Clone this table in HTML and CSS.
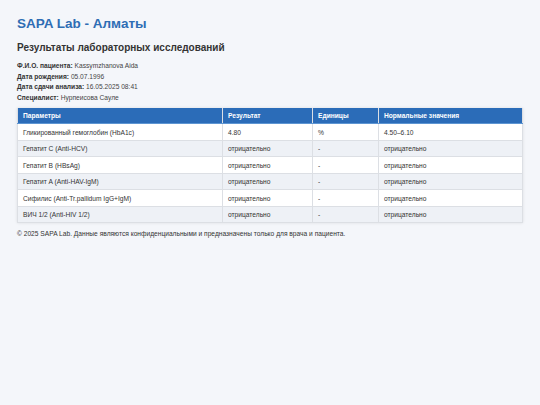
FILE: index.html
```html
<!DOCTYPE html>
<html lang="ru">
<head>
<meta charset="utf-8">
<title>SAPA Lab</title>
<link rel="stylesheet" href="styles.css">
</head>
<body>
<div class="page">
  <h1 class="title">SAPA Lab - Алматы</h1>
  <h2 class="subtitle">Результаты лабораторных исследований</h2>
  <div class="info">
    <div><b>Ф.И.О. пациента:</b> Kassymzhanova Aida</div>
    <div><b>Дата рождения:</b> 05.07.1996</div>
    <div><b>Дата сдачи анализа:</b> 16.05.2025 08:41</div>
    <div><b>Специалист:</b> Нурпеисова Сауле</div>
  </div>
  <table class="results">
    <thead>
      <tr><th class="c1">Параметры</th><th class="c2">Результат</th><th class="c3">Единицы</th><th class="c4">Нормальные значения</th></tr>
    </thead>
    <tbody>
      <tr><td>Гликированный гемоглобин (HbA1c)</td><td>4.80</td><td>%</td><td>4.50–6.10</td></tr>
      <tr><td>Гепатит C (Anti-HCV)</td><td>отрицательно</td><td>-</td><td>отрицательно</td></tr>
      <tr><td>Гепатит B (HBsAg)</td><td>отрицательно</td><td>-</td><td>отрицательно</td></tr>
      <tr><td>Гепатит A (Anti-HAV-IgM)</td><td>отрицательно</td><td>-</td><td>отрицательно</td></tr>
      <tr><td>Сифилис (Anti-Tr.pallidum IgG+IgM)</td><td>отрицательно</td><td>-</td><td>отрицательно</td></tr>
      <tr><td>ВИЧ 1/2 (Anti-HIV 1/2)</td><td>отрицательно</td><td>-</td><td>отрицательно</td></tr>
    </tbody>
  </table>
  <p class="footer">© 2025 SAPA Lab. Данные являются конфиденциальными и предназначены только для врача и пациента.</p>
</div>
</body>
</html>
```
FILE: styles.css
```css
html, body {
  margin: 0;
  padding: 0;
  background: #f4f6fa;
}
body {
  font-family: "Liberation Sans", Arial, sans-serif;
  color: #333;
}
.page {
  padding: 15px 17px;
}
.title {
  margin: 0;
  font-size: 13.5px;
  line-height: 17px;
  color: #2e6db4;
  font-weight: bold;
}
.subtitle {
  margin: 10px 0 0;
  font-size: 10px;
  line-height: 12px;
  color: #333;
  font-weight: bold;
}
.info {
  margin-top: 7px;
  font-size: 6.65px;
  line-height: 10.7px;
  color: #444;
}
.info b {
  color: #333;
}
.results {
  margin-top: 4px;
  width: 506px;
  table-layout: fixed;
  border-collapse: collapse;
  font-size: 6.65px;
  background: #fff;
  box-shadow: 0 0 3px rgba(0,0,0,0.1);
}
.results th,
.results td {
  box-sizing: border-box;
}
.results th {
  background: #2b6cb8;
  color: #fff;
  text-align: left;
  font-weight: bold;
  height: 16px;
  padding: 0 5px;
  border: 1px solid #dcdfe4;
  border-top: none;
  border-bottom: 1px solid #5d95d2;
}
.results td {
  height: 16.5px;
  padding: 0 5px;
  border: 1px solid #dcdfe4;
  color: #333;
}
.results tbody tr:nth-child(even) td {
  background: #eef1f6;
}
.c1 { width: 205px; }
.c2 { width: 90px; }
.c3 { width: 66px; }
.footer {
  margin: 6px 0 0;
  font-size: 6.65px;
  line-height: 10px;
  color: #333;
}
```
